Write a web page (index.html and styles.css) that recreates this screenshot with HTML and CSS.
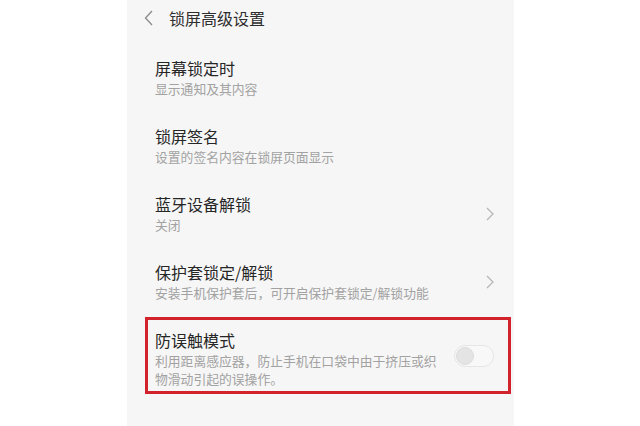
FILE: index.html
```html
<!DOCTYPE html>
<html lang="zh-CN">
<head>
<meta charset="utf-8">
<link rel="stylesheet" href="styles.css">
</head>
<body>
<div class="screen">
  <div class="header">
    <svg class="back" width="9" height="16" viewBox="0 0 9 16"><path d="M8 1 L1.5 8 L8 15" fill="none" stroke="#8a8a8a" stroke-width="1.3"/></svg>
    <span class="htitle">锁屏高级设置</span>
  </div>
  <div class="list">
    <div class="item">
      <div class="text">
        <div class="title">屏幕锁定时</div>
        <div class="sub">显示通知及其内容</div>
      </div>
    </div>
    <div class="item">
      <div class="text">
        <div class="title">锁屏签名</div>
        <div class="sub">设置的签名内容在锁屏页面显示</div>
      </div>
    </div>
    <div class="item">
      <div class="text">
        <div class="title">蓝牙设备解锁</div>
        <div class="sub">关闭</div>
      </div>
      <svg class="chev" width="8" height="14" viewBox="0 0 8 14"><path d="M1 1 L7 7 L1 13" fill="none" stroke="#b4b4b4" stroke-width="1.2"/></svg>
    </div>
    <div class="item">
      <div class="text">
        <div class="title">保护套锁定/解锁</div>
        <div class="sub">安装手机保护套后，可开启保护套锁定/解锁功能</div>
      </div>
      <svg class="chev" width="8" height="14" viewBox="0 0 8 14"><path d="M1 1 L7 7 L1 13" fill="none" stroke="#b4b4b4" stroke-width="1.2"/></svg>
    </div>
    <div class="item last">
      <div class="text">
        <div class="title">防误触模式</div>
        <div class="sub multi">利用距离感应器，防止手机在口袋中由于挤压或织<br>物滑动引起的误操作。</div>
      </div>
      <div class="toggle"><div class="knob"></div></div>
      <div class="mark"></div>
    </div>
  </div>
</div>
</body>
</html>
```
FILE: styles.css
```css
html, body {
  margin: 0;
  padding: 0;
  background: #ffffff;
}
body {
  width: 640px;
  height: 426px;
  overflow: hidden;
  font-family: "Noto Sans CJK SC", "Noto Sans", sans-serif;
}
.screen {
  margin-left: 127px;
  width: 387px;
  height: 426px;
  background: #f6f6f6;
}
.header {
  height: 36px;
  display: flex;
  align-items: center;
  padding-left: 17px;
}
.back {
  display: block;
}
.htitle {
  margin-left: 16px;
  font-size: 16px;
  line-height: 22px;
  color: #2e2e2e;
}
.list {
  padding-top: 21px;
}
.item {
  position: relative;
  height: 68px;
  display: flex;
  align-items: flex-start;
  padding-left: 28px;
  padding-right: 20px;
}
.text {
  flex: 1;
}
.title {
  font-size: 16px;
  line-height: 22px;
  color: #262626;
}
.sub {
  font-size: 12.8px;
  line-height: 20px;
  color: #a2a2a2;
}
.sub.multi {
  line-height: 18px;
  padding-top: 1px;
}
.chev {
  display: block;
  margin-top: 14px;
}
.toggle {
  margin-top: 16px;
  width: 40px;
  height: 22px;
  box-sizing: border-box;
  border: 1px solid #e6e6e6;
  border-radius: 11px;
  background: #f8f8f8;
  padding: 1px;
}
.knob {
  width: 18px;
  height: 18px;
  border-radius: 50%;
  background: #e4e4e4;
  box-sizing: border-box;
  border: 1px solid #dcdcdc;
}
.mark {
  position: absolute;
  top: -12px;
  left: 18px;
  right: 3px;
  height: 77px;
  box-sizing: border-box;
  border: 3.5px solid #d2222c;
  pointer-events: none;
}
```
